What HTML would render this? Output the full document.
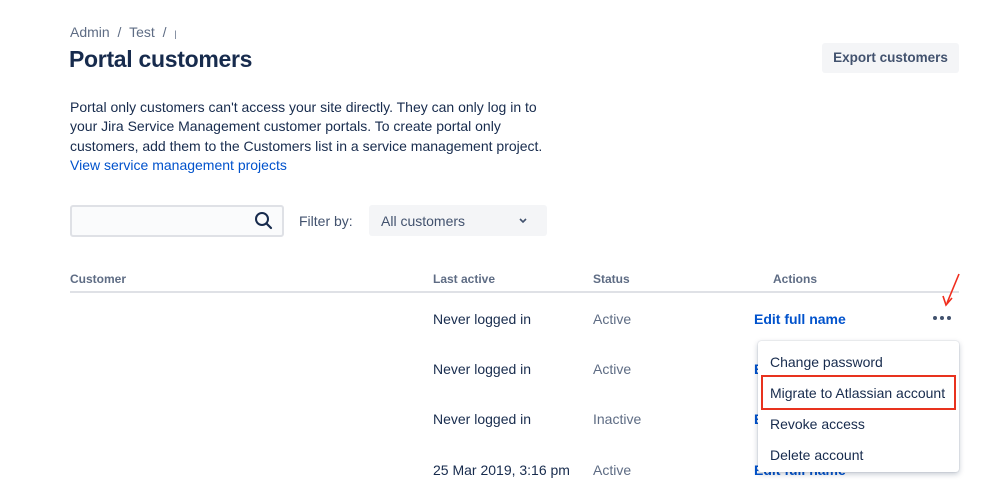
<!DOCTYPE html>
<html><head><style>
body{margin:0;width:999px;height:503px;background:#fff;font-family:"Liberation Sans",sans-serif;color:#172b4d;position:relative;overflow:hidden}
.a{position:absolute;white-space:nowrap}
.t{font-size:14px}
.h{font-size:12px;font-weight:bold;color:#5e6c84}
.l{color:#0052cc}
.g{color:#5e6c84}
</style></head><body>
<div class="a t g" style="left:70px;top:24px">Admin &nbsp;/ &nbsp;Test &nbsp;/ &nbsp;<span style="font-size:9px">|</span></div>
<div class="a" style="left:69px;top:46px;font-size:23px;font-weight:bold;letter-spacing:-0.3px">Portal customers</div>
<div class="a t" style="left:822px;top:43px;width:137px;height:30px;background:#f4f5f7;border-radius:3px;line-height:30px;text-align:center;font-weight:bold;color:#42526e;font-size:13.5px">Export customers</div>
<div class="a t" style="left:70px;top:98px;line-height:19.3px">Portal only customers can't access your site directly. They can only log in to<br>your Jira Service Management customer portals. To create portal only<br>customers, add them to the Customers list in a service management project.<br><span class="l">View service management projects</span></div>
<div class="a" style="left:70px;top:205px;width:210px;height:28px;border:2px solid #dfe1e6;border-radius:3px;background:#fafbfc"></div>
<svg class="a" style="left:254px;top:211px" width="20" height="20"><circle cx="8" cy="8" r="6" fill="none" stroke="#172b4d" stroke-width="2"/><path d="M12.5 12.5L17 17" stroke="#172b4d" stroke-width="2.2" stroke-linecap="round"/></svg>
<div class="a t" style="left:299px;top:213px;color:#42526e">Filter by:</div>
<div class="a t" style="left:369px;top:205px;width:178px;height:31px;background:#f4f5f7;border-radius:3px"></div>
<div class="a t" style="left:381px;top:213px;color:#42526e">All customers</div>
<svg class="a" style="left:518px;top:217px" width="10" height="8"><path d="M2 2l3 3 3-3" fill="none" stroke="#42526e" stroke-width="1.6"/></svg>
<div class="a h" style="left:70px;top:272px">Customer</div>
<div class="a h" style="left:433px;top:272px">Last active</div>
<div class="a h" style="left:593px;top:272px">Status</div>
<div class="a h" style="left:773px;top:272px">Actions</div>
<div class="a" style="left:70px;top:291px;width:889px;height:2px;background:#dfe1e6"></div>
<div class="a t" style="left:433px;top:311px">Never logged in</div><div class="a t g" style="left:593px;top:311px">Active</div><div class="a t l" style="left:754px;top:311px;font-weight:bold">Edit full name</div>
<div class="a t" style="left:433px;top:361px">Never logged in</div><div class="a t g" style="left:593px;top:361px">Active</div><div class="a t l" style="left:754px;top:361px;font-weight:bold">E</div>
<div class="a t" style="left:433px;top:411px">Never logged in</div><div class="a t g" style="left:593px;top:411px">Inactive</div><div class="a t l" style="left:754px;top:411px;font-weight:bold">E</div>
<div class="a t" style="left:433px;top:462px">25 Mar 2019, 3:16 pm</div><div class="a t g" style="left:593px;top:462px">Active</div><div class="a t l" style="left:754px;top:462px;font-weight:bold">Edit full name</div>
<svg class="a" style="left:932px;top:314px" width="20" height="8"><circle cx="3" cy="4" r="2" fill="#42526e"/><circle cx="10" cy="4" r="2" fill="#42526e"/><circle cx="17" cy="4" r="2" fill="#42526e"/></svg>
<svg class="a" style="left:940px;top:272px" width="22" height="36"><path d="M19 2L7 31" stroke="#f02d1d" stroke-width="1.6"/><path d="M3 24L6 33 12 26" fill="none" stroke="#f02d1d" stroke-width="1.6"/></svg>
<div class="a" style="left:758px;top:341px;width:201px;height:131px;background:#fff;border-radius:3px;box-shadow:0 2px 6px rgba(9,30,66,.25),0 0 1px rgba(9,30,66,.31)"></div>
<div class="a t" style="left:770px;top:354px">Change password</div>
<div class="a" style="left:761px;top:375px;width:195px;height:35px;border:2px solid #e8321e;box-sizing:border-box"></div>
<div class="a t" style="left:770px;top:385px">Migrate to Atlassian account</div>
<div class="a t" style="left:770px;top:416px">Revoke access</div>
<div class="a t" style="left:770px;top:447px">Delete account</div>
</body></html>
